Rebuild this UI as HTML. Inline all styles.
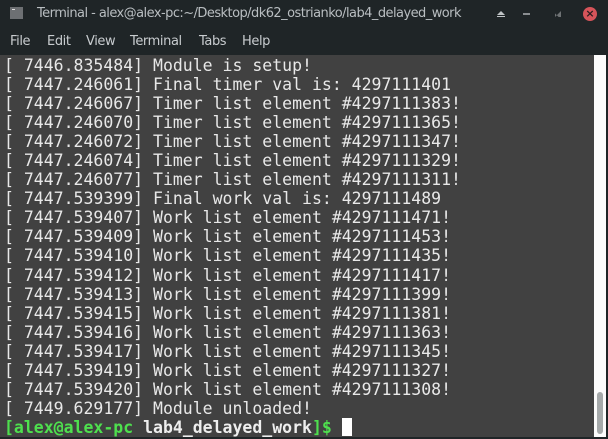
<!DOCTYPE html>
<html><head><meta charset="utf-8"><style>
html,body{margin:0;padding:0;width:608px;height:439px;overflow:hidden;background:#1f2527;}
.title{position:absolute;left:37px;top:6px;font:13px "DejaVu Sans",sans-serif;color:#b9bec1;letter-spacing:-0.55px;white-space:nowrap;}
.menu span{position:absolute;top:34px;font:13px "DejaVu Sans",sans-serif;color:#c8cccf;letter-spacing:-0.4px;}
.term{position:absolute;left:0;top:55px;width:594px;height:382px;background:#414141;}
.trough{position:absolute;left:594px;top:55px;width:12px;height:382px;background:#fcfcfc;}
.thumb{position:absolute;left:597px;top:392px;width:6px;height:42px;background:#a5a9aa;border-radius:3px;}
pre{position:absolute;left:4px;top:56px;margin:0;font-family:"DejaVu Sans Mono",monospace;font-size:16.5px;line-height:19px;color:#e8e8e8;}
pre div{height:19.05px;line-height:19px;white-space:pre;}
.g{color:#4ee04e;font-weight:bold}
.b{font-weight:bold;color:#eee}
.cur{display:inline-block;width:10px;height:18px;background:#fff;vertical-align:-3px;}
</style></head><body>
<div style="position:absolute;left:10px;top:7px;width:13px;height:12px;background:#6d7073"></div>
<div style="position:absolute;left:12px;top:9px;width:3px;height:1px;background:#ddd"></div>
<div class="title">Terminal - alex@alex-pc:~/Desktop/dk62_ostrianko/lab4_delayed_work</div>
<div style="position:absolute;left:497px;top:11px;width:0;height:0;border-left:4px solid transparent;border-right:4px solid transparent;border-bottom:4px solid #c0c4c6"></div>
<div style="position:absolute;left:497px;top:16px;width:8px;height:1px;background:#c0c4c6"></div>
<div style="position:absolute;left:523px;top:13px;width:7px;height:2px;background:#8a8e91"></div>
<div style="position:absolute;left:555px;top:11px;width:6px;height:6px;background:#6e7274;clip-path:polygon(0 100%,100% 0,100% 100%,60% 100%,0 40%)"></div>
<div style="position:absolute;left:583px;top:7px;width:14px;height:14px;border-radius:50%;background:#d6545a;color:#2a1d1f;font:bold 11px/14px 'DejaVu Sans',sans-serif;text-align:center">×</div>
<div class="menu"><span style="left:10px">File</span><span style="left:47px">Edit</span><span style="left:86px">View</span><span style="left:130px">Terminal</span><span style="left:199px">Tabs</span><span style="left:242px">Help</span></div>
<div class="term"></div>
<div class="trough"></div><div class="thumb"></div>
<pre><div>[ 7446.835484] Module is setup!</div><div>[ 7447.246061] Final timer val is: 4297111401</div><div>[ 7447.246067] Timer list element #4297111383!</div><div>[ 7447.246070] Timer list element #4297111365!</div><div>[ 7447.246072] Timer list element #4297111347!</div><div>[ 7447.246074] Timer list element #4297111329!</div><div>[ 7447.246077] Timer list element #4297111311!</div><div>[ 7447.539399] Final work val is: 4297111489</div><div>[ 7447.539407] Work list element #4297111471!</div><div>[ 7447.539409] Work list element #4297111453!</div><div>[ 7447.539410] Work list element #4297111435!</div><div>[ 7447.539412] Work list element #4297111417!</div><div>[ 7447.539413] Work list element #4297111399!</div><div>[ 7447.539415] Work list element #4297111381!</div><div>[ 7447.539416] Work list element #4297111363!</div><div>[ 7447.539417] Work list element #4297111345!</div><div>[ 7447.539419] Work list element #4297111327!</div><div>[ 7447.539420] Work list element #4297111308!</div><div>[ 7449.629177] Module unloaded!</div><div><span class="g">[alex@alex-pc </span><span class="b">lab4_delayed_work</span><span class="g">]$</span> <span class="cur"></span></div></pre>
</body></html>
